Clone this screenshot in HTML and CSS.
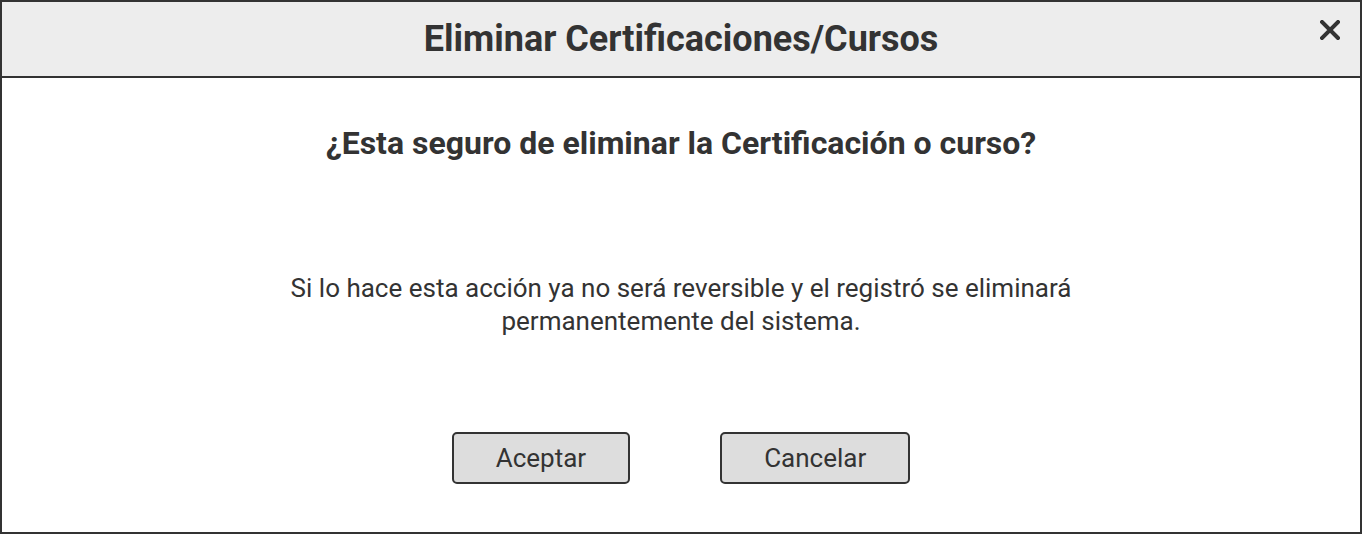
FILE: index.html
```html
<!DOCTYPE html>
<html lang="es">
<head>
<meta charset="utf-8">
<title>Eliminar Certificaciones/Cursos</title>
<link rel="stylesheet" href="styles.css">
</head>
<body>
<div class="dialog">
  <header class="dialog-header">
    <h1 class="dialog-title">Eliminar Certificaciones/Cursos</h1>
    <button class="close-btn" aria-label="Cerrar">
      <svg width="20" height="20" viewBox="0 0 20 20"><path d="M2 2 L18 18 M18 2 L2 18" stroke="#333" stroke-width="4" stroke-linecap="square" fill="none"/></svg>
    </button>
  </header>
  <div class="dialog-body">
    <p class="question">¿Esta seguro de eliminar la Certificación o curso?</p>
    <p class="message">Si lo hace esta acción ya no será reversible y el registró se eliminará<br>permanentemente del sistema.</p>
    <div class="actions">
      <button class="btn">Aceptar</button>
      <button class="btn">Cancelar</button>
    </div>
  </div>
</div>
</body>
</html>
```
FILE: styles.css
```css
* { box-sizing: border-box; }
html, body { margin: 0; padding: 0; }
body {
  width: 1362px;
  height: 534px;
  font-family: Roboto, "Liberation Sans", sans-serif;
  color: #333;
  background: #fff;
}
.dialog {
  width: 1362px;
  height: 534px;
  border: 2px solid #333;
  display: flex;
  flex-direction: column;
}
.dialog-header {
  position: relative;
  height: 76px;
  background: #ededed;
  border-bottom: 2px solid #333;
  display: flex;
  align-items: center;
  justify-content: center;
  flex: none;
}
.dialog-title {
  margin: 0;
  font-size: 36px;
  font-weight: 700;
  line-height: 40px;
}
.close-btn {
  position: absolute;
  top: 16px;
  right: 18px;
  width: 24px;
  height: 24px;
  padding: 2px;
  border: 0;
  background: transparent;
  display: flex;
}
.dialog-body {
  flex: 1;
  display: flex;
  flex-direction: column;
  align-items: center;
  padding-top: 46px;
}
.question {
  margin: 0;
  font-size: 32px;
  font-weight: 700;
  line-height: 38px;
}
.message {
  margin: 110px 0 0;
  font-size: 26px;
  line-height: 33px;
  text-align: center;
}
.actions {
  margin-top: 94px;
  display: flex;
  gap: 90px;
}
.btn {
  height: 52px;
  padding: 0 42px;
  border: 2px solid #333;
  border-radius: 5px;
  background: #ddd;
  color: #333;
  font-family: Roboto, "Liberation Sans", sans-serif;
  font-size: 26px;
}
```
